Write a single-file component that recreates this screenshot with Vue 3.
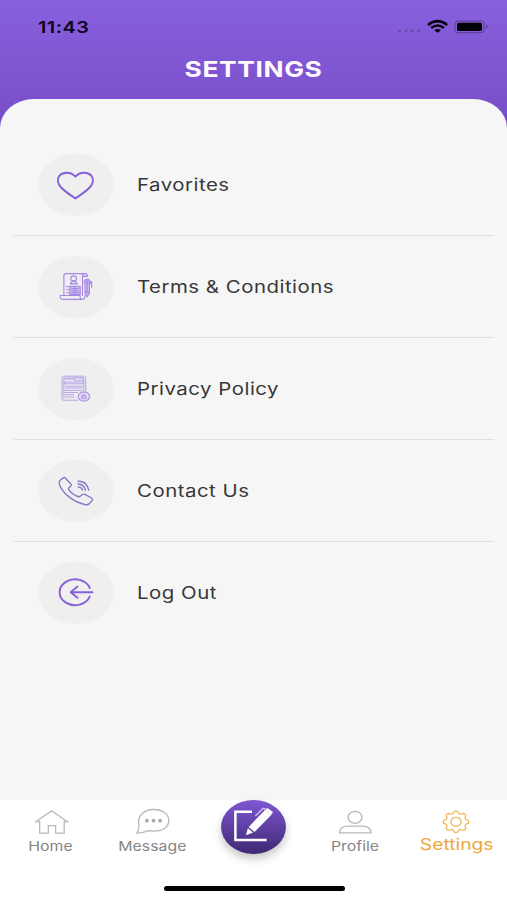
<script setup>
const rows = [
  { id: 'favorites', label: 'Favorites' },
  { id: 'terms', label: 'Terms & Conditions' },
  { id: 'privacy', label: 'Privacy Policy' },
  { id: 'contact', label: 'Contact Us' },
  { id: 'logout', label: 'Log Out' },
]

// Eight-lobed gear outline, slightly wider than tall.
const gearPath = (() => {
  const pts = []
  for (let i = 0; i <= 96; i++) {
    const a = (i / 96) * Math.PI * 2
    const k = 1 + 0.12 * Math.tanh(1.8 * Math.cos(8 * a))
    pts.push(`${(20 + 11.4 * k * Math.cos(a)).toFixed(2)} ${(15.8 + 9.6 * k * Math.sin(a)).toFixed(2)}`)
  }
  return `M${pts.join('L')}Z`
})()
</script>

<template>
  <div class="screen">
    <header class="header">
      <div class="status">
        <span class="time">11:43</span>
        <svg class="status-icons" width="92" height="16" viewBox="0 0 92 16">
          <g class="signal">
            <circle cx="2.5" cy="12" r="1.5" /><circle cx="9" cy="12" r="1.5" />
            <circle cx="15.3" cy="12" r="1.5" /><circle cx="21.7" cy="12" r="1.5" />
          </g>
          <g class="wifi">
            <path d="M31 5.9Q40.6-1.6 50.2 5.9" />
            <path d="M34.2 8.9Q40.6 4 47 8.9" />
            <path class="solid" d="M37.2 11.2Q40.6 8.8 44 11.2L40.6 13.8Z" />
          </g>
          <rect class="shell" x="58" y="2.1" width="29" height="11.5" rx="3.2" />
          <rect x="60" y="3.8" width="25" height="8.1" rx="1.6" />
          <path class="nub" d="M88.7 5.8q2.3 .6 2.3 2t-2.3 2z" />
        </svg>
      </div>
      <h1 class="title"><span>SETTINGS</span></h1>
    </header>

    <main class="panel">
      <div v-for="row in rows" :key="row.id" class="row">
        <div class="badge">
          <svg width="76" height="62" viewBox="0.3 0.3 76 62">
            <g v-if="row.id === 'favorites'" class="line bold">
              <path d="M37.7 22.9C33 17.6 25 18.2 21.8 22C19 25.3 20 30 23 33.3C27 37.8 33 41.5 37.7 44.8C42.4 41.5 48.4 37.8 52.4 33.3C55.4 30 56.4 25.3 53.6 22C50.4 18.2 42.4 17.6 37.7 22.9Z" />
            </g>
            <g v-else-if="row.id === 'terms'" class="line thin">
              <path d="M26.2 39.8V20q0-2.1 2.5-2.1H47.5q2.2 0 2.2 2.8H44.8V39.8M44.8 20.7q0-2.8 2.7-2.8" />
              <path d="M22.4 39.8H42.2q.2 3.9 2.5 3.9H25q-2.5 0-2.6-3.9ZM44.7 43.7q2.6-.2 2.6-3.9" />
              <ellipse cx="36" cy="22.7" rx="2.9" ry="2.5" />
              <path d="M32.7 28.2q0-2.4 3.3-2.4t3.3 2.4ZM28.7 30.8h2M28.7 34h2M28.7 37h2" />
              <rect class="tint" x="32" y="30.5" width="10.5" height="8.3" />
              <path d="M34 32.8h6.5M34 35h6.5M34 37h6.5M37.2 31v7.5" />
              <path class="tint" d="M47.3 27V37.5L49.5 41.2L51.8 37.5V27ZM46.4 27q0-3 3.1-3.3q3.1.3 3.1 3.3ZM52 26h2v5.5M47.3 36.5h4.5" />
              <path d="M49.5 24v13" />
            </g>
            <g v-else-if="row.id === 'privacy'" class="line fine">
              <path d="M40 42.5H25.8q-1.5 0-1.5-1.5V19.8q0-1.3 1.5-1.3H46.5q1.5 0 1.5 1.3V33" />
              <path d="M26.2 40.5V20.3H46V33M27.5 21.3h8" />
              <rect x="36.7" y="20.4" width="8.8" height="2.2" class="blank" />
              <path d="M26.5 24.3H46M26.5 26.1H46M28 28.5H44.5M28 30.4H44.5M27.5 32.8H44M27.5 34.8H40M27.5 37H36M27.5 39.3H36.5" />
              <ellipse class="seal" cx="46.2" cy="38.9" rx="5.6" ry="4.6" />
              <path class="tint" d="M43.9 38h4.6v3h-4.6ZM44.9 38v-.8q1.3-1.5 2.6 0v.8" />
            </g>
            <g v-else-if="row.id === 'contact'" class="line call">
              <path d="M27.5 18.3L33.5 24.6Q34 25.5 33.1 26.4L30.7 28.7Q31 31 35 34.1Q38.8 37 41.7 37.1L44.4 35Q45.8 34 47.3 34.7L53.8 38.3Q55.4 39.3 54.6 40.7L51.4 44.2Q49.9 45.4 46.9 44.8C35.8 42.3 24.8 33.5 22 25.3Q20.9 22 22.2 20.8L25.6 18.2Q26.6 17.5 27.5 18.3Z" />
              <path d="M40.3 21.5Q49 21.3 51 30.4M40.3 24.3Q46.3 24.4 47.7 30.5M40.5 27.2Q43.8 27.3 44.7 30.3" />
            </g>
            <g v-else class="line bold">
              <path d="M52 26.2A15.5 12.9 0 1 0 52 34.9M54.8 30.5H33M39.8 24.9L33 30.5L39.8 36.1" />
            </g>
          </svg>
        </div>
        <span class="label">{{ row.label }}</span>
      </div>
    </main>

    <nav class="tabs">
      <div class="tab">
        <svg width="40" height="32" viewBox="0 0 40 32">
          <path d="M20.6 4.8L36.4 15.7H33.2V27.2H24.6V19.7H17.3V27.2H8.7V15.7H5Z" />
        </svg>
        <span class="tab-label">Home</span>
      </div>
      <div class="tab">
        <svg width="40" height="32" viewBox="0 0 40 32">
          <path d="M5 27.2Q7.2 24 6.9 19C5 10.5 11.5 3.5 21.5 3.5C31 3.5 36.8 8.5 36.8 14.5C36.8 21 31 25.2 22 25.2Q19 25.2 16.5 24.7Q11.5 27 5 27.2Z" />
          <g class="dots"><circle cx="14.9" cy="14.7" r="1.9" /><circle cx="21.5" cy="14.7" r="1.9" /><circle cx="28" cy="14.7" r="1.9" /></g>
        </svg>
        <span class="tab-label">Message</span>
      </div>
      <div class="tab center">
        <div class="compose">
          <svg width="65" height="54" viewBox="0 0 65 54">
            <path class="frame" d="M31 11.7H14.4V40H45.7" />
            <path class="pencil" d="M27.6 27L43.5 10.4L50 15.2L33.5 32Z" />
            <path class="pencil" d="M43.5 10.4L46.3 8L52 12L50 15.2Z" />
            <path class="pencil" d="M26.8 28.3L32.1 32.6L25 35.3Z" />
            <path class="clip" d="M34.3 16L42.3 8.2L44.6 9.4" />
          </svg>
        </div>
      </div>
      <div class="tab">
        <svg width="40" height="32" viewBox="0 0 40 32">
          <ellipse cx="20" cy="11.3" rx="6.9" ry="6" />
          <path d="M4.6 26.8Q5 20.2 13 20.2H27.5Q35.5 20.2 36 26.8Z" />
        </svg>
        <span class="tab-label">Profile</span>
      </div>
      <div class="tab active">
        <svg width="40" height="32" viewBox="0 0 40 32">
          <path :d="gearPath" />
          <ellipse cx="20" cy="15.8" rx="5.2" ry="4.4" />
        </svg>
        <span class="tab-label">Settings</span>
      </div>
      <div class="home-indicator"></div>
    </nav>
  </div>
</template>

<style>
body {
  margin: 0;
}
</style>

<style scoped>
.screen {
  width: 507px;
  height: 900px;
  display: flex;
  flex-direction: column;
  overflow: hidden;
  font-family: Inter, "Liberation Sans", sans-serif;
  background: linear-gradient(#885fdd 0, #784ec7 128px);
}
.header {
  height: 99px;
  flex: none;
}
.status {
  height: 53px;
  display: flex;
  align-items: center;
  justify-content: space-between;
  padding: 0 18px 0 38px;
  box-sizing: border-box;
}
.time {
  font-size: 16.5px;
  font-weight: 600;
  letter-spacing: 0.4px;
  color: #0d0620;
  transform: scaleX(1.2);
  transform-origin: left;
}
.status-icons {
  display: block;
}
.signal {
  fill: #684aab;
}
.wifi {
  fill: none;
  stroke: #08030f;
  stroke-width: 2.5;
}
.wifi .solid {
  fill: #08030f;
  stroke: none;
}
.shell {
  fill: none;
  stroke: #5f429c;
  stroke-width: 1.1;
}
.nub {
  fill: #5f429c;
}
.title {
  margin: 0;
  height: 33px;
  line-height: 33px;
  text-align: center;
  font-size: 22px;
  font-weight: 700;
  letter-spacing: 0.5px;
  color: #fdf9ff;
}
.title span {
  display: inline-block;
  transform: scaleX(1.2);
}
.panel {
  flex: none;
  height: 701px;
  box-sizing: border-box;
  padding: 35px 13px 0 14px;
  border-radius: 34px 34px 0 0 / 29px 29px 0 0;
  background: #f6f6f6;
}
.row {
  display: flex;
  align-items: center;
  gap: 23.3px;
  height: 102px;
  box-sizing: border-box;
  padding-left: 24px;
  border-bottom: 1.5px solid #dfdfdf;
}
.row:last-child {
  border-color: transparent;
}
.badge {
  width: 76px;
  height: 62px;
  border-radius: 50%;
  background: #efefef;
}
.badge svg {
  display: block;
}
.line {
  fill: none;
  stroke: #8660d9;
  stroke-linejoin: round;
  stroke-linecap: round;
}
.bold {
  stroke-width: 1.9;
}
.thin {
  stroke-width: 1.1;
  stroke: #a486e4;
}
.fine {
  stroke-width: 0.9;
  stroke: #ae98e2;
}
.call {
  stroke-width: 1.4;
  stroke: #8c75c9;
}
.tint {
  fill: #cdbcf0;
}
.seal {
  fill: #ebe5f7;
  stroke-width: 1.3;
}
.blank {
  fill: #f8f6fc;
}
.label {
  font-size: 17px;
  letter-spacing: 0.42px;
  color: #383838;
  white-space: nowrap;
  transform: scaleX(1.2);
  transform-origin: left;
}
.tabs {
  position: relative;
  flex: none;
  height: 100px;
  display: grid;
  grid-template-columns: repeat(5, 1fr);
  background: #fff;
}
.tab {
  display: flex;
  flex-direction: column;
  align-items: center;
  padding-top: 6px;
  color: #858585;
}
.tab > svg {
  display: block;
  fill: none;
  stroke: #b9b9b9;
  stroke-width: 1.3;
}
.tab .dots {
  fill: #a9a9a9;
  stroke: none;
}
.tab-label {
  height: 16px;
  line-height: 16px;
  font-size: 13.2px;
  transform: scaleX(1.2);
}
.active {
  color: #efa63a;
}
.active > svg {
  stroke: #f2b560;
}
.active .tab-label {
  font-size: 16px;
  line-height: 13px;
}
.center {
  padding-top: 0;
}
.compose {
  width: 65px;
  height: 54px;
  border-radius: 50%;
  background: linear-gradient(#7f57d2, #3f2873);
  box-shadow: 0 5px 8px rgba(0, 0, 0, 0.22);
}
.compose svg {
  display: block;
}
.frame {
  fill: none;
  stroke: #fff;
  stroke-width: 2.5;
}
.pencil {
  fill: #fff;
}
.clip {
  fill: none;
  stroke: #d9caf5;
  stroke-width: 1.2;
}
.home-indicator {
  position: absolute;
  left: 164px;
  top: 85.5px;
  width: 181px;
  height: 5.5px;
  border-radius: 3px;
  background: #000;
}
</style>
